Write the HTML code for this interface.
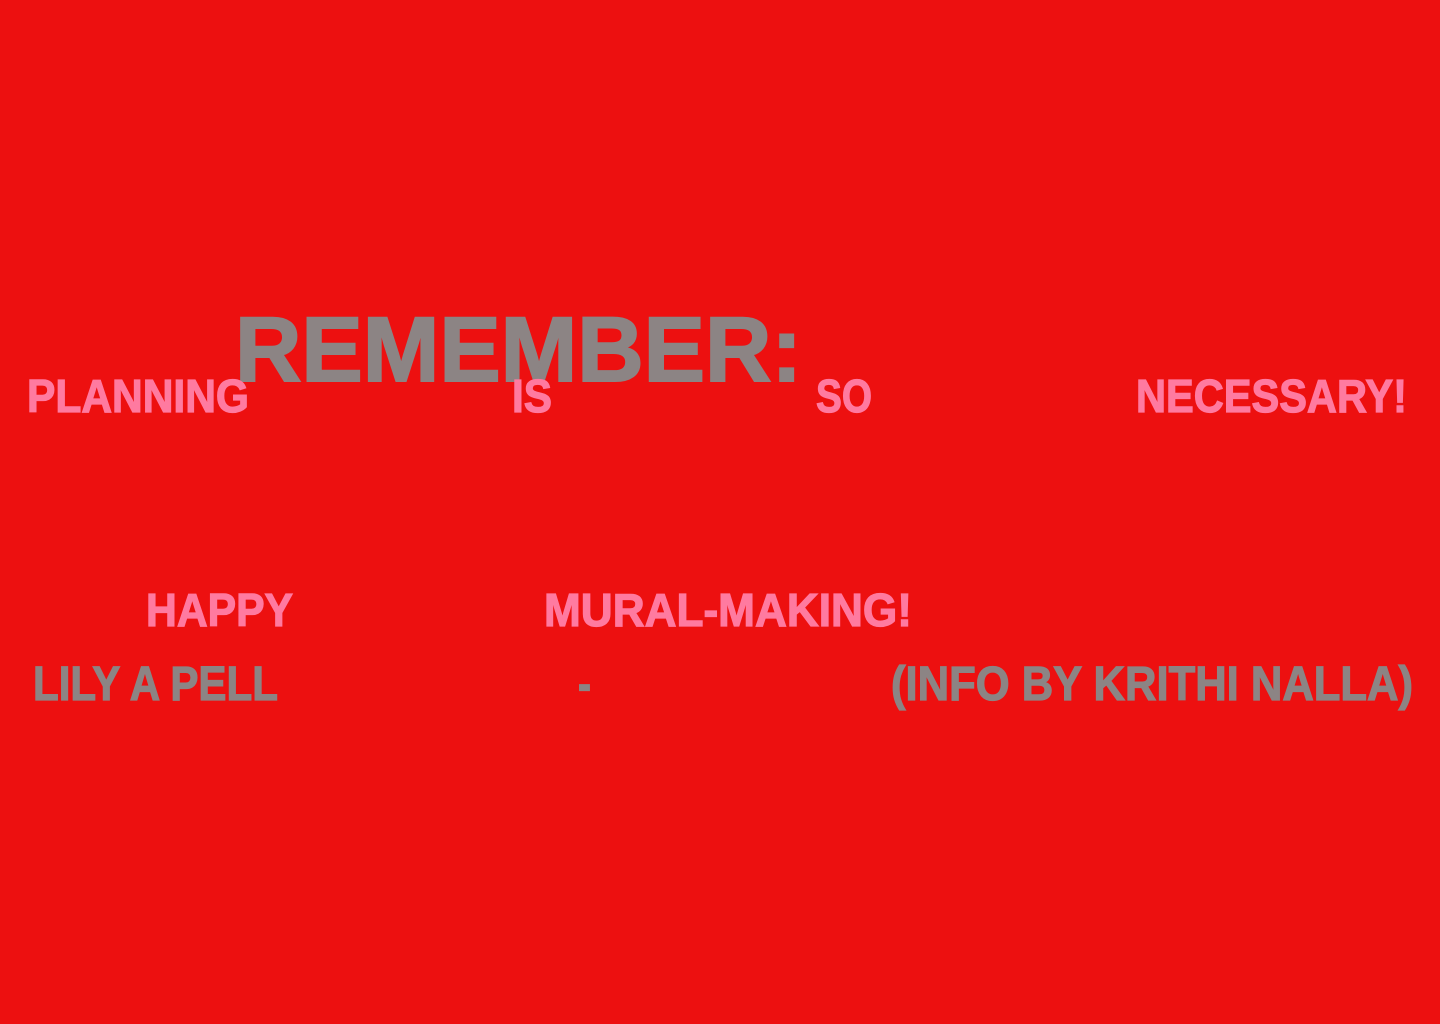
<!DOCTYPE html>
<html><head><meta charset="utf-8"><style>
html,body{margin:0;padding:0}
body{width:1440px;height:1024px;background:#ED1010;position:relative;overflow:hidden;font-family:"Liberation Sans",sans-serif;font-weight:bold}
.t{position:absolute;line-height:1;white-space:nowrap;transform-origin:0 0;-webkit-text-stroke:1.2px currentColor}
.g{color:#8C8484}.p{color:#FF7AA0}
</style></head><body>
<div class="t g" style="left:235px;top:304px;font-size:92px;-webkit-text-stroke:2px currentColor" title="567">REMEMBER:</div>
<div class="t p" style="left:27px;top:373px;font-size:46px" title="222">PLANNING</div>
<div class="t p" style="left:512px;top:373px;font-size:46px" title="40">IS</div>
<div class="t p" style="left:816px;top:373px;font-size:46px" title="56">SO</div>
<div class="t p" style="left:1136px;top:373px;font-size:46px" title="271">NECESSARY!</div>
<div class="t p" style="left:146px;top:587px;font-size:46px" title="147">HAPPY</div>
<div class="t p" style="left:544px;top:587px;font-size:46px" title="368">MURAL-MAKING!</div>
<div class="t g" style="left:33px;top:661px;font-size:48px" title="245">LILY A PELL</div>
<div class="t g" style="left:578px;top:661px;font-size:48px" title="13">-</div>
<div class="t g" style="left:891px;top:661px;font-size:48px" title="522">(INFO BY KRITHI NALLA)</div>
<script>
document.querySelectorAll('.t').forEach(function(e){
  var w=parseFloat(e.getAttribute('title'));e.removeAttribute('title');
  var r=e.getBoundingClientRect().width;
  if(r>0)e.style.transform='scaleX('+(w/r)+')';
});
</script>
</body></html>
